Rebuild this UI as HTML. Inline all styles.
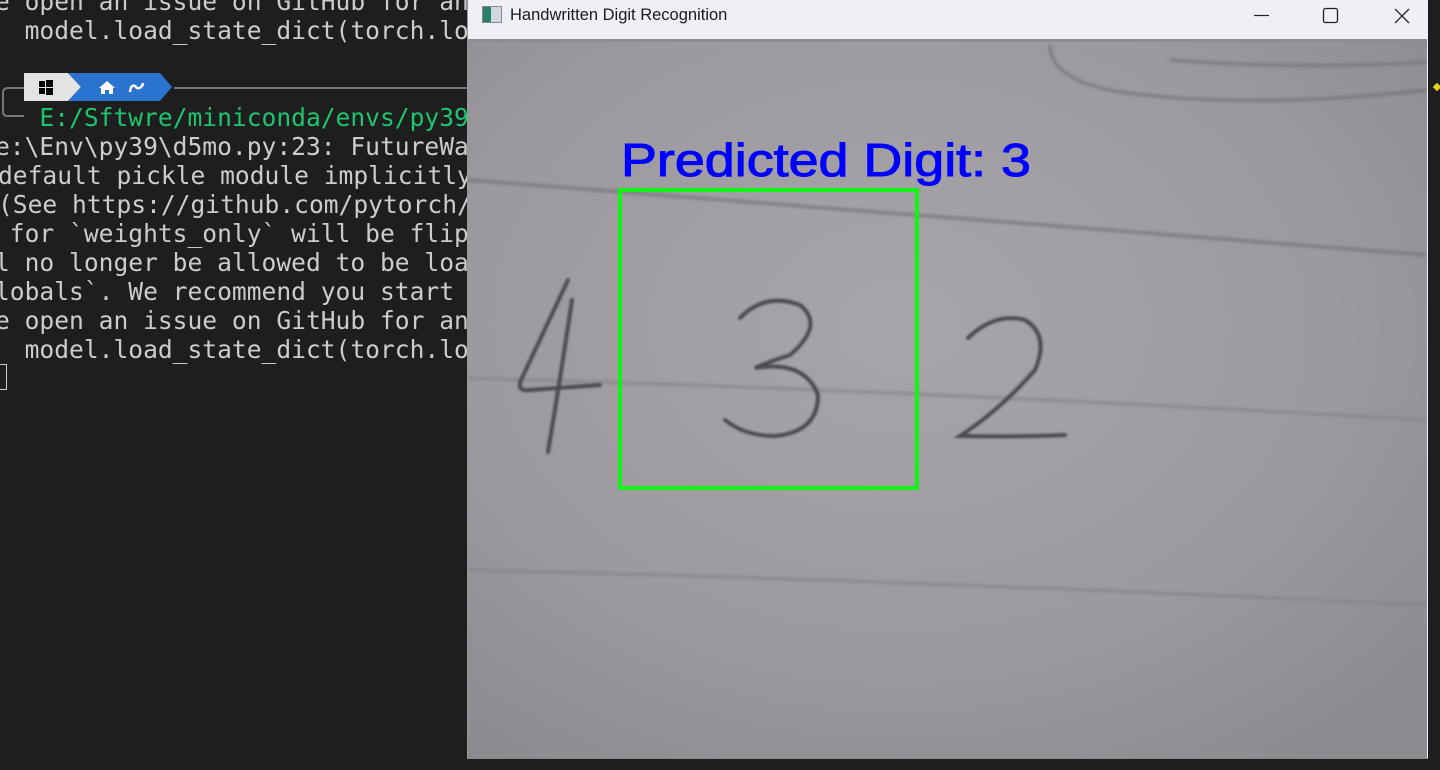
<!DOCTYPE html>
<html><head><meta charset="utf-8"><style>
html,body{margin:0;padding:0;width:1440px;height:770px;overflow:hidden;background:#1e1e1e;}
.t{position:absolute;left:-5px;font-family:"DejaVu Sans Mono","Liberation Mono",monospace;font-size:24.6px;color:#cccccc;white-space:pre;line-height:29px;height:29px;}
</style></head><body>
<div class="t" style="top:-13px">e open an issue on GitHub for an</div>
<div class="t" style="top:16px">  model.load_state_dict(torch.lo</div>
<div class="t" style="top:103px;color:#1fc46f">   E:/Sftwre/miniconda/envs/py39</div>
<div class="t" style="top:132px">e:\Env\py39\d5mo.py:23: FutureWa</div>
<div class="t" style="top:161px;left:-2px">default pickle module implicitly</div>
<div class="t" style="top:190px;left:-2px">(See https://github.com/pytorch/</div>
<div class="t" style="top:219px"> for `weights_only` will be flip</div>
<div class="t" style="top:248px">l no longer be allowed to be loa</div>
<div class="t" style="top:277px">lobals`. We recommend you start </div>
<div class="t" style="top:306px">e open an issue on GitHub for an</div>
<div class="t" style="top:335px">  model.load_state_dict(torch.lo</div>
<div style="position:absolute;left:0;top:364px;width:6px;height:24px;border:1.5px solid #ccc;border-left:none"></div>
<svg style="position:absolute;left:0;top:70px" width="470" height="50">
<path d="M24 18 H8 Q3 18 3 23 V42 Q3 46 8 46 H24" fill="none" stroke="#777" stroke-width="2"/>
<polygon points="24,3 68,3 81,17 68,31 24,31" fill="#e3e3e3"/>
<polygon points="68,3 160,3 172,17 160,31 68,31 81,17" fill="#2a73cf"/>
<line x1="174" y1="18" x2="470" y2="18" stroke="#777" stroke-width="2"/>
<g fill="#000"><rect x="39" y="11" width="6" height="6"/><rect x="46" y="10" width="7" height="7"/><rect x="39" y="18" width="6" height="6"/><rect x="46" y="18" width="7" height="7"/></g>
<path d="M99 18 L107 11 L115 18 H113 V24 H109 V20 H105 V24 H101 V18 Z" fill="#fff"/>
<path d="M130 22 Q131 14 135 16 Q138 20 141 17 Q143 15 143 13" fill="none" stroke="#fff" stroke-width="2.5"/>
</svg>
<div style="position:absolute;left:1434px;top:84px;width:6px;height:6px;background:#e8d020;transform:rotate(45deg)"></div>
<!-- window -->
<div style="position:absolute;left:467px;top:0;width:961px;height:759px;background:#eff0f6;border-left:1px solid #999;border-bottom:1px solid #888;box-sizing:border-box;">
<div style="position:absolute;left:14px;top:6px;width:20px;height:17px;border:1px solid #888;background:linear-gradient(90deg,#2a7f6a 0 45%,#cfd8e0 45%);box-sizing:border-box"></div>
<div style="position:absolute;left:42px;top:6px;font-family:'Liberation Sans',sans-serif;font-size:16.5px;color:#1a1a1a">Handwritten Digit Recognition</div>
<svg style="position:absolute;left:760px;top:0" width="200" height="38">
<line x1="26" y1="15.5" x2="41" y2="15.5" stroke="#222" stroke-width="1.2"/>
<rect x="95.5" y="8.5" width="14" height="14" rx="2" fill="none" stroke="#222" stroke-width="1.3"/>
<path d="M167 9 L181 23 M181 9 L167 23" stroke="#222" stroke-width="1.3"/>
</svg>
</div>
<svg style="position:absolute;left:468px;top:39px" width="959" height="719" viewBox="468 39 959 719">
<defs>
<radialGradient id="g" cx="0.45" cy="0.4" r="0.75"><stop offset="0" stop-color="#a7a5aa"/><stop offset="0.6" stop-color="#9c9a9f"/><stop offset="1" stop-color="#8c8a8f"/></radialGradient>
<filter id="b"><feGaussianBlur stdDeviation="1.6"/></filter>
<filter id="b2"><feGaussianBlur stdDeviation="1"/></filter>
</defs>
<rect x="468" y="39" width="959" height="719" fill="url(#g)"/>
<rect x="468" y="39" width="959" height="3" fill="#8d8c90"/>
<g fill="none" stroke="#737277" filter="url(#b)" stroke-width="2.5">
<path d="M1050 45 Q1050 80 1120 92 Q1250 110 1427 90"/>
<path d="M1170 60 Q1300 70 1427 62"/>
<path d="M468 180 Q800 205 1427 255"/>
<path d="M468 378 Q900 390 1427 420" stroke="#858489"/>
<path d="M468 570 Q900 580 1427 605" stroke="#858489"/>
</g>
<g fill="none" stroke="#4c4b50" stroke-width="4" stroke-linecap="round" filter="url(#b2)">
<path d="M568 280 L522 378 Q515 392 530 390 L600 385"/>
<path d="M572 300 Q560 380 548 452"/>
<path d="M740 318 Q765 292 800 305 Q825 325 790 355 Q760 365 755 368 Q805 360 818 395 Q818 432 775 436 Q745 436 725 420"/>
<path d="M968 338 Q995 312 1025 320 Q1050 335 1035 370 Q1000 410 960 436 Q1020 437 1065 435"/>
</g>
<rect x="620" y="190" width="297" height="298" fill="none" stroke="#00ff00" stroke-width="3.5"/>
<text x="621" y="176" font-family="Liberation Sans,sans-serif" font-size="46" fill="#0000ff" stroke="#0000ff" stroke-width="1" textLength="410" lengthAdjust="spacingAndGlyphs">Predicted Digit: 3</text>
</svg>
</body></html>
